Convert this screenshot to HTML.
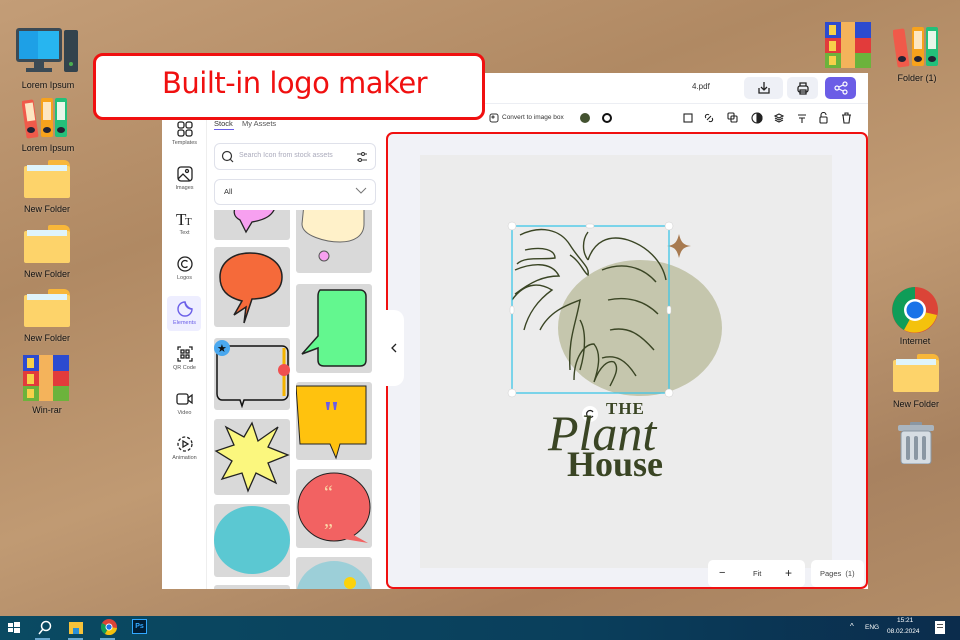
<!DOCTYPE html>
<html><head><meta charset="utf-8">
<style>
*{margin:0;padding:0;box-sizing:border-box}
body{width:960px;height:640px;overflow:hidden;position:relative;font-family:"Liberation Sans",sans-serif;
background:linear-gradient(160deg,#c39d77 0%,#b08963 30%,#c09a73 55%,#a88260 80%,#b48e68 100%);}
.abs{position:absolute}
.dl{position:absolute;font-size:9px;color:#111;text-align:center;width:80px;text-shadow:0 0 2px rgba(255,255,255,.3)}
.fold{position:absolute;width:46px;height:38px}
.fold:before{content:"";position:absolute;left:0;top:0;width:22px;height:8px;background:#f8b73a;border-radius:2px 6px 0 0;left:24px}
.fold:after{content:"";position:absolute;left:0;top:6px;width:46px;height:32px;background:#fdd36a;border-radius:2px}
.fold i{position:absolute;left:3px;top:5px;width:40px;height:6px;background:#dff4fb;z-index:1}
.win{position:absolute;left:162px;top:73px;width:706px;height:516px;background:#fff}
.side{position:absolute;left:162px;top:104px;width:45px;height:485px;background:#fff;border-right:1px solid #eee}
.si{position:absolute;left:162px;width:45px;text-align:center;font-size:5.5px;color:#555}
.si svg{display:block;margin:0 auto 2px}
.tile{position:absolute;background:#d9d9d9;border-radius:3px;overflow:hidden}
.tb{font-size:7px;color:#333}
</style></head><body>

<svg class="abs" style="left:16px;top:26px" width="64" height="50"><rect x="0" y="2" width="46" height="34" rx="3" fill="#3b4a55"/><rect x="3" y="5" width="40" height="28" fill="#1ea0e6"/><rect x="22" y="5" width="21" height="28" fill="#27b5f0"/><rect x="18" y="36" width="10" height="6" fill="#3b4a55"/><rect x="10" y="42" width="26" height="4" fill="#3b4a55"/><rect x="48" y="4" width="14" height="42" rx="2" fill="#33434d"/><circle cx="55" cy="38" r="2" fill="#4caf50"/></svg>
<div class="dl" style="left:8px;top:80px">Lorem Ipsum</div>
<svg class="abs" style="left:22px;top:97px" width="50" height="42"><rect x="2" y="3" width="12" height="38" rx="2" fill="#f05a4a" transform="rotate(-8 8 22)"/><rect x="19" y="1" width="12" height="39" rx="2" fill="#f7a21c"/><rect x="33" y="1" width="12" height="39" rx="2" fill="#23c07a"/><rect x="21" y="5" width="8" height="18" fill="#fde6c2"/><rect x="35" y="5" width="8" height="18" fill="#e8f7ea"/><rect x="5" y="6" width="8" height="18" fill="#fde6c2" transform="rotate(-8 8 22)"/><ellipse cx="25" cy="33" rx="4" ry="3" fill="#223"/><ellipse cx="39" cy="33" rx="4" ry="3" fill="#223"/><ellipse cx="9" cy="33" rx="4" ry="3" fill="#223"/></svg>
<div class="dl" style="left:8px;top:143px">Lorem Ipsum</div>
<div class="fold" style="left:24px;top:160px"><i></i></div><div class="dl" style="left:7px;top:204px">New Folder</div>
<div class="fold" style="left:24px;top:225px"><i></i></div><div class="dl" style="left:7px;top:269px">New Folder</div>
<div class="fold" style="left:24px;top:289px"><i></i></div><div class="dl" style="left:7px;top:333px">New Folder</div>
<svg class="abs" style="left:23px;top:355px" width="46" height="46"><rect width="46" height="16" fill="#2c4bd0"/><rect y="16" width="46" height="15" fill="#e23b3b"/><rect y="31" width="46" height="15" fill="#6cb33c"/><rect x="16" width="14" height="46" fill="#f4b35b"/><rect x="4" y="3" width="7" height="10" fill="#f7d14a"/><rect x="4" y="19" width="7" height="10" fill="#f7d14a"/><rect x="4" y="34" width="7" height="9" fill="#f7d14a"/></svg>
<div class="dl" style="left:7px;top:405px">Win-rar</div>

<svg class="abs" style="left:825px;top:22px" width="46" height="46"><rect width="46" height="16" fill="#2c4bd0"/><rect y="16" width="46" height="15" fill="#e23b3b"/><rect y="31" width="46" height="15" fill="#6cb33c"/><rect x="16" width="14" height="46" fill="#f4b35b"/><rect x="4" y="3" width="7" height="10" fill="#f7d14a"/><rect x="4" y="19" width="7" height="10" fill="#f7d14a"/><rect x="4" y="34" width="7" height="9" fill="#f7d14a"/></svg>
<svg class="abs" style="left:893px;top:26px" width="50" height="42"><rect x="2" y="3" width="12" height="38" rx="2" fill="#f05a4a" transform="rotate(-8 8 22)"/><rect x="19" y="1" width="12" height="39" rx="2" fill="#f7a21c"/><rect x="33" y="1" width="12" height="39" rx="2" fill="#23c07a"/><rect x="21" y="5" width="8" height="18" fill="#fde6c2"/><rect x="35" y="5" width="8" height="18" fill="#e8f7ea"/><ellipse cx="25" cy="33" rx="4" ry="3" fill="#223"/><ellipse cx="39" cy="33" rx="4" ry="3" fill="#223"/><ellipse cx="9" cy="33" rx="4" ry="3" fill="#223"/></svg>
<div class="dl" style="left:877px;top:73px">Folder (1)</div>
<svg class="abs" style="left:892px;top:287px" width="46" height="46"><circle cx="23" cy="23" r="23" fill="#db4437"/><path d="M23 23 L3 12 A23 23 0 0 0 12 43Z" fill="#0f9d58"/><path d="M23 23 L12 43 A23 23 0 0 0 45 28Z" fill="#f4c20d"/><path d="M23 23 L3 12 A23 23 0 0 1 23 0 L23 0Z" fill="#0f9d58"/><circle cx="23" cy="23" r="11" fill="#fff"/><circle cx="23" cy="23" r="8.5" fill="#1a73e8"/></svg>
<div class="dl" style="left:875px;top:336px">Internet</div>
<div class="fold" style="left:893px;top:354px"><i></i></div><div class="dl" style="left:876px;top:399px">New Folder</div>
<svg class="abs" style="left:897px;top:422px" width="38" height="42"><rect x="13" y="0" width="12" height="4" rx="1" fill="#8a97a3"/><rect x="1" y="3" width="36" height="6" rx="2" fill="#aab5bf"/><rect x="4" y="9" width="30" height="33" rx="3" fill="#d6dde3" stroke="#8a97a3"/><rect x="9" y="14" width="4" height="24" rx="2" fill="#8a97a3"/><rect x="17" y="14" width="4" height="24" rx="2" fill="#8a97a3"/><rect x="25" y="14" width="4" height="24" rx="2" fill="#8a97a3"/></svg>

<div class="win"></div>
<div class="abs" style="left:162px;top:103px;width:706px;height:1px;background:#eceef3"></div>
<div class="abs tb" style="left:692px;top:82px;font-size:8px">4.pdf</div>
<div class="abs" style="left:744px;top:77px;width:39px;height:22px;background:#eef0f6;border-radius:5px"></div>
<svg class="abs" style="left:756px;top:80px" width="16" height="16" fill="none" stroke="#222" stroke-width="1.3"><path d="M3 8v5h10V8M8 2v8M5 7l3 3 3-3"/></svg>
<div class="abs" style="left:787px;top:77px;width:31px;height:22px;background:#eef0f6;border-radius:5px"></div>
<svg class="abs" style="left:795px;top:80px" width="16" height="16" fill="none" stroke="#222" stroke-width="1.3"><rect x="3" y="6" width="10" height="6" rx="2"/><path d="M5 6V3h6v3M5 10h6v4H5z"/></svg>
<div class="abs" style="left:825px;top:77px;width:31px;height:22px;background:#6b5de6;border-radius:5px"></div>
<svg class="abs" style="left:833px;top:80px" width="16" height="16" fill="none" stroke="#fff" stroke-width="1.2"><circle cx="4" cy="8" r="2"/><circle cx="12" cy="4" r="2"/><circle cx="12" cy="12" r="2"/><path d="M6 7l4-2M6 9l4 2"/></svg>

<svg class="abs" style="left:489px;top:113px" width="10" height="10" fill="none" stroke="#333"><rect x="1" y="1" width="8" height="8" rx="2"/><circle cx="4" cy="4" r="1"/></svg>
<div class="abs" style="left:502px;top:114px;font-size:6.5px;color:#333">Convert to image box</div>
<div class="abs" style="left:580px;top:113px;width:10px;height:10px;border-radius:50%;background:#435230"></div>
<div class="abs" style="left:602px;top:113px;width:10px;height:10px;border-radius:50%;border:2.5px solid #111"></div>
<svg class="abs" style="left:682px;top:112px" width="172" height="13" fill="none" stroke="#222" stroke-width="1.1">
<rect x="2" y="2" width="8" height="8"/><path d="M25 8l4-4M24 6a2 2 0 0 1 3-3M30 6a2 2 0 0 1-3 3"/>
<rect x="46" y="1" width="6" height="6" rx="1"/><rect x="49" y="4" width="6" height="6" rx="1"/>
<circle cx="75" cy="6" r="5"/><path d="M75 1a5 5 0 0 1 0 10z" fill="#222"/>
<path d="M93 4l4-2 4 2-4 2zM93 6l4 2 4-2M93 8l4 2 4-2"/>
<path d="M116 3h8M117 6h6M120 6v5"/>
<rect x="138" y="5" width="7" height="6" rx="1"/><path d="M139 5V3a2.5 2.5 0 0 1 5 0"/>
<path d="M160 3h9M161 3l1 8h5l1-8M163 3V1h3v2"/></svg>

<div class="side"></div>
<div class="abs" style="left:167px;top:296px;width:34px;height:35px;background:#eeeeff;border-radius:4px"></div>
<div class="si" style="top:120px"><svg width="18" height="18" fill="none" stroke="#222" stroke-width="1.3"><rect x="2" y="2" width="6" height="6" rx="2"/><rect x="10" y="2" width="6" height="6" rx="2"/><rect x="2" y="10" width="6" height="6" rx="2"/><rect x="10" y="10" width="6" height="6" rx="2"/></svg>Templates</div>
<div class="si" style="top:165px"><svg width="18" height="18" fill="none" stroke="#222" stroke-width="1.3"><rect x="2" y="2" width="14" height="14" rx="3"/><circle cx="11" cy="6" r="1.5"/><path d="M2 14l5-5 7 7"/></svg>Images</div>
<div class="si" style="top:210px"><svg width="20" height="18"><text x="1" y="15" font-family="Liberation Serif" font-size="17" fill="#222">T</text><text x="10" y="15" font-family="Liberation Serif" font-size="11" fill="#222">T</text></svg>Text</div>
<div class="si" style="top:255px"><svg width="18" height="18" fill="none" stroke="#222" stroke-width="1.3"><circle cx="9" cy="9" r="7"/><path d="M11.5 6.5a3.5 3.5 0 1 0 0 5"/></svg>Logos</div>
<div class="si" style="top:300px;color:#6a5ee8"><svg width="18" height="18" fill="none" stroke="#6a5ee8" stroke-width="1.4"><path d="M16 9a7 7 0 1 1-7-7c0 4 3 7 7 7z"/><path d="M9 2c1 4 3 6 7 7"/></svg>Elements</div>
<div class="si" style="top:345px"><svg width="18" height="18" fill="none" stroke="#222" stroke-width="1.3"><path d="M2 5V2h3M13 2h3v3M2 13v3h3M16 13v3h-3"/><rect x="5" y="5" width="3" height="3"/><rect x="10" y="5" width="3" height="3"/><rect x="5" y="10" width="3" height="3"/><rect x="10" y="10" width="3" height="3"/></svg>QR Code</div>
<div class="si" style="top:390px"><svg width="20" height="18" fill="none" stroke="#222" stroke-width="1.3"><rect x="2" y="4" width="11" height="10" rx="2"/><path d="M13 8l4-3v8l-4-3"/></svg>Video</div>
<div class="si" style="top:435px"><svg width="18" height="18" fill="none" stroke="#222" stroke-width="1.3"><circle cx="9" cy="9" r="7" stroke-dasharray="3 2"/><path d="M7 6v6l5-3z"/></svg>Animation</div>

<div class="abs" style="left:214px;top:119px;font-size:7.5px;color:#333">Stock</div>
<div class="abs" style="left:214px;top:129px;width:20px;height:1px;background:#6a5ee8"></div>
<div class="abs" style="left:242px;top:119px;font-size:7.5px;color:#555">My Assets</div>
<div class="abs" style="left:214px;top:143px;width:162px;height:27px;border:1px solid #dfe1ea;border-radius:6px"></div>
<svg class="abs" style="left:221px;top:150px" width="13" height="13" fill="none" stroke="#333" stroke-width="1.2"><circle cx="6" cy="6" r="4.5"/><path d="M9.5 9.5l2.5 2.5"/></svg>
<div class="abs" style="left:239px;top:152px;font-size:7px;color:#aab">Search Icon from stock assets</div>
<svg class="abs" style="left:356px;top:151px" width="12" height="12" fill="none" stroke="#333"><path d="M1 3h10M1 9h10"/><circle cx="7" cy="3" r="1.5" fill="#fff"/><circle cx="4" cy="9" r="1.5" fill="#fff"/></svg>
<div class="abs" style="left:214px;top:179px;width:162px;height:26px;border:1px solid #dfe1ea;border-radius:6px"></div>
<div class="abs" style="left:224px;top:187px;font-size:7.5px;color:#333">All</div>
<svg class="abs" style="left:355px;top:187px" width="12" height="8" fill="none" stroke="#777"><path d="M1 1l5 5 5-5"/></svg>

<div class="abs" style="left:207px;top:210px;width:177px;height:379px;overflow:hidden">
<div class="tile" style="left:7px;top:-6px;width:76px;height:36px"><svg width="76" height="36"><path d="M22 0h40c-2 12-12 16-24 18l-6 10-6-12C18 12 20 6 22 0z" fill="#f7a0f0" stroke="#222" stroke-width="1.3"/></svg></div>
<div class="tile" style="left:7px;top:37px;width:76px;height:80px"><svg width="76" height="80"><path d="M6 30c0-14 12-24 30-24s32 10 32 24-12 22-30 22l-8 24 2-16-12 8 8-14C12 50 6 42 6 30z" fill="#f56a3a" stroke="#222" stroke-width="1.5"/></svg></div>
<div class="tile" style="left:7px;top:128px;width:76px;height:72px"><svg width="76" height="72"><path d="M6 8h62c4 0 6 3 6 6v42c0 3-2 6-6 6H30l-2 6-2-6H8c-3 0-5-3-5-6V14c0-4 2-6 3-6z" fill="#d9d9d9" stroke="#111" stroke-width="1.5"/><path d="M70 10v48" stroke="#f5b400" stroke-width="3"/><circle cx="8" cy="10" r="8" fill="#4aa8ef"/><text x="3" y="14" font-size="11" fill="#111">★</text><circle cx="70" cy="32" r="6" fill="#f05050"/></svg></div>
<div class="tile" style="left:7px;top:209px;width:76px;height:76px"><svg width="76" height="76"><polygon points="38,4 44,22 64,8 54,28 74,36 54,44 62,64 42,54 34,72 28,54 8,60 18,42 2,32 20,26 12,8 30,18" fill="#fbf77e" stroke="#222" stroke-width="1.3"/></svg></div>
<div class="tile" style="left:7px;top:294px;width:76px;height:73px"><svg width="76" height="73"><ellipse cx="38" cy="36" rx="38" ry="34" fill="#5bc8d2"/></svg></div>
<div class="tile" style="left:7px;top:375px;width:76px;height:20px"></div>
<div class="tile" style="left:89px;top:-6px;width:76px;height:69px"><svg width="76" height="69"><path d="M8 0h60v20c0 12-10 18-24 18S6 32 6 20z" fill="#fff1c9" stroke="#666"/><circle cx="28" cy="52" r="5" fill="#f7a0f0" stroke="#555"/></svg></div>
<div class="tile" style="left:89px;top:74px;width:76px;height:89px"><svg width="76" height="89"><path d="M24 6h40c4 0 6 3 6 6v64c0 4-2 6-6 6H28c-4 0-6-2-6-6V64L6 70l16-18V12c0-4 2-6 2-6z" fill="#63f78f" stroke="#222" stroke-width="1.5"/></svg></div>
<div class="tile" style="left:89px;top:172px;width:76px;height:78px"><svg width="76" height="78"><path d="M0 4h70v58H44l-4 14-6-14H4z" fill="#ffc20e" stroke="#222"/><text x="26" y="42" font-size="34" font-weight="bold" fill="#6b5de6" font-family="Liberation Serif">"</text></svg></div>
<div class="tile" style="left:89px;top:259px;width:76px;height:79px"><svg width="76" height="79"><ellipse cx="38" cy="38" rx="36" ry="34" fill="#f26262" stroke="#222"/><path d="M54 64l18 10-24-4z" fill="#f26262"/><text x="28" y="30" font-size="20" fill="#fbd9a8" font-family="Liberation Serif">“</text><text x="28" y="68" font-size="20" fill="#fbd9a8" font-family="Liberation Serif">”</text></svg></div>
<div class="tile" style="left:89px;top:347px;width:76px;height:40px"><svg width="76" height="40"><ellipse cx="38" cy="40" rx="38" ry="36" fill="#9ccfd8"/><circle cx="54" cy="26" r="6" fill="#fcd20b"/></svg></div>
</div>

<div class="abs" style="left:386px;top:132px;width:482px;height:457px;background:#f1f2f7;border:2.5px solid #f01010;border-radius:7px"></div>
<div class="abs" style="left:420px;top:155px;width:412px;height:413px;background:#ececec"></div>
<div class="abs" style="left:386px;top:310px;width:18px;height:76px;background:#fff;border-radius:0 10px 10px 0"></div>
<svg class="abs" style="left:390px;top:343px" width="8" height="10" fill="none" stroke="#222" stroke-width="1.3"><path d="M6 1L2 5l4 4"/></svg>

<svg class="abs" style="left:490px;top:210px" width="250" height="280">
<ellipse cx="150" cy="118" rx="82" ry="68" fill="#c5c6ad"/>
<path d="M189 24c2 8 4 11 12 12-8 1-10 4-12 12-2-8-4-11-12-12 8-1 10-4 12-12z" fill="#a87a50"/>
<g fill="none" stroke="#3a4524" stroke-width="1.4">
<path d="M30 25c20-10 40-6 50 10 10 16 20 22 18 30-4-2-8-14-18-20M35 40c18-4 30 0 30 8-12 2-30-2-38 6M25 60c14-6 36-10 44 6-16 0-28 6-44 18M22 90c14-20 30-16 40-10-14 10-24 24-28 40M50 120c10-20 30-26 40-30-4 24-12 38-10 70M90 110c6 10 6 30 0 50M98 50c6-18 20-26 40-20 18 6 34 20 38 40M112 60c20-8 40-4 54 12M118 90c18-4 36 0 50 14M120 120c18-4 30 4 44 20M112 148c14-4 24 2 34 18M84 170c0-22 10-36 20-36 8 10 4 26 0 38M104 172c6-16 14-22 20-20 6 6 0 16-4 24"/>
<path d="M98 50c-6-8-6-20 0-28"/>
</g>
<rect x="22" y="16" width="157" height="167" fill="none" stroke="#3ec6e8" stroke-width="1.3"/>
<g fill="#fff" stroke="#ccc" stroke-width=".5"><circle cx="22" cy="16" r="4"/><circle cx="179" cy="16" r="4"/><circle cx="22" cy="183" r="4"/><circle cx="179" cy="183" r="4"/><rect x="96" y="14" width="8" height="4" rx="2"/><rect x="177" y="96" width="4" height="8" rx="2"/><rect x="20" y="96" width="4" height="8" rx="2"/></g>
<circle cx="100" cy="204" r="8" fill="#fff"/><path d="M103 202a3.5 3.5 0 1 0 0 4" fill="none" stroke="#222" stroke-width="1.2"/>
<text x="116" y="204" font-family="Liberation Serif" font-weight="bold" font-size="17" fill="#3a4524" letter-spacing="1">THE</text>
<text x="58" y="240" font-family="Liberation Serif" font-style="italic" font-size="50" fill="#3a4524">Plant</text>
<text x="77" y="266" font-family="Liberation Serif" font-weight="bold" font-size="36" fill="#3a4524">House</text>
</svg>

<div class="abs" style="left:708px;top:560px;width:97px;height:27px;background:#fff;border-radius:5px"></div>
<div class="abs" style="left:719px;top:567px;font-size:11px;color:#222">−</div>
<div class="abs" style="left:753px;top:569px;font-size:7.5px;color:#333">Fit</div>
<div class="abs" style="left:785px;top:566px;font-size:12px;color:#222">+</div>
<div class="abs" style="left:811px;top:560px;width:53px;height:27px;background:#fff;border-radius:5px"></div>
<div class="abs" style="left:820px;top:569px;font-size:7.5px;color:#444">Pages&nbsp; (1)</div>

<div class="abs" style="left:93px;top:53px;width:392px;height:67px;background:#fff;border:3px solid #f01010;border-radius:10px"></div>
<div class="abs" style="left:162px;top:66px;font-size:29px;color:#f01010;font-family:'DejaVu Sans','Liberation Sans',sans-serif;letter-spacing:-.5px">Built-in logo maker</div>

<div class="abs" style="left:0;top:616px;width:960px;height:24px;background:linear-gradient(90deg,#0a4a62,#0a3f5c 60%,#0b2c4c)"></div>
<svg class="abs" style="left:8px;top:622px" width="12" height="12" fill="#fff"><rect x="0" y="1" width="5" height="4"/><rect x="6" y="0" width="6" height="5"/><rect x="0" y="6" width="5" height="4"/><rect x="6" y="6" width="6" height="5"/></svg>
<svg class="abs" style="left:38px;top:620px" width="14" height="16" fill="none" stroke="#fff" stroke-width="1.5"><circle cx="8" cy="6" r="4.5"/><path d="M5 9l-4 5"/></svg>
<svg class="abs" style="left:69px;top:620px" width="14" height="15"><rect x="0" y="2" width="14" height="12" fill="#f7c33a"/><rect x="4" y="8" width="6" height="6" fill="#2a8fd6"/></svg>
<svg class="abs" style="left:101px;top:619px" width="16" height="16"><circle cx="8" cy="8" r="8" fill="#db4437"/><path d="M8 8L1 4A8 8 0 0 0 4 15z" fill="#0f9d58"/><path d="M8 8L4 15A8 8 0 0 0 16 9z" fill="#f4c20d"/><circle cx="8" cy="8" r="3.5" fill="#fff"/><circle cx="8" cy="8" r="2.6" fill="#1a73e8"/></svg>
<div class="abs" style="left:132px;top:619px;width:15px;height:15px;background:#001e36;border:1px solid #31a8ff;color:#31a8ff;font-size:7px;font-weight:bold;text-align:center;line-height:13px">Ps</div>
<div class="abs" style="left:35px;top:638px;width:15px;height:2px;background:#6aa8cf"></div>
<div class="abs" style="left:68px;top:638px;width:15px;height:2px;background:#6aa8cf"></div>
<div class="abs" style="left:100px;top:638px;width:15px;height:2px;background:#6aa8cf"></div>
<div class="abs" style="left:850px;top:622px;font-size:8px;color:#fff">^</div>
<div class="abs" style="left:865px;top:624px;font-size:6.5px;color:#fff">ENG</div>
<div class="abs" style="left:897px;top:617px;font-size:6.5px;color:#fff">15:21</div>
<div class="abs" style="left:887px;top:628px;font-size:6.5px;color:#fff">08.02.2024</div>
<svg class="abs" style="left:935px;top:621px" width="10" height="13"><rect x="0" y="0" width="10" height="13" fill="#fff"/><rect x="2" y="3" width="6" height="1" fill="#555"/><rect x="2" y="6" width="6" height="1" fill="#555"/></svg>
</body></html>
